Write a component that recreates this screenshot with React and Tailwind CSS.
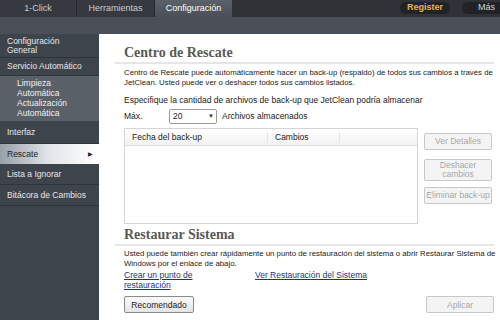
import React from "react";

const font = { fontFamily: '"Liberation Sans", Arial, sans-serif' };

function TopBar() {
  return (
    <div className="flex h-[17px] bg-[#2e3136] text-[9px] text-[#c9ccd0]">
      <div className="flex w-[77px] items-center justify-center border-r border-[#24272b] bg-[#363a40]">1-Click</div>
      <div className="flex w-[78px] items-center justify-center border-r border-[#24272b] bg-[#363a40]">Herramientas</div>
      <div className="flex w-[77px] items-center justify-center bg-gradient-to-b from-[#5c626a] to-[#4b5058] text-white">
        Configuración
      </div>
      <div className="flex-1" />
      <div className="mt-[2px] flex h-[12px] w-[50px] items-center justify-center rounded-full bg-[#202226] font-bold text-[#e8b34c]">
        Register
      </div>
      <div className="ml-[12px] mt-[2px] flex h-[12px] w-[38px] items-center rounded-l-full bg-[#202226] pl-[16px] text-[#d0d3d6]">
        Más
      </div>
    </div>
  );
}

function SideItem({ children, className = "" }) {
  return (
    <div className={"border-b border-[#30343a] px-[7px] text-[8.5px] text-[#e4e6e8] " + className}>{children}</div>
  );
}

function Sidebar() {
  return (
    <div className="w-[99px] shrink-0 bg-[#3e444c]">
      <SideItem className="flex h-[24px] flex-col justify-center leading-[9px]">
        <span>Configuración</span>
        <span>General</span>
      </SideItem>
      <SideItem className="flex h-[18px] items-center">Servicio Automático</SideItem>
      <div className="flex h-[45px] flex-col justify-center bg-[#5a6068] pl-[17px] text-[8.5px] leading-[9.5px] text-[#eef0f2]">
        <span>Limpieza</span>
        <span>Automática</span>
        <span className="mt-[1px]">Actualización</span>
        <span>Automática</span>
      </div>
      <SideItem className="flex h-[23px] items-center">Interfaz</SideItem>
      <div className="flex h-[20px] items-center justify-between bg-gradient-to-r from-[#98a0a8] via-[#e2e6ea] to-white pl-[7px] pr-[6px] text-[8.5px] text-[#222]">
        <span>Rescate</span>
        <span className="text-[6px]">▶</span>
      </div>
      <SideItem className="flex h-[21px] items-center">Lista a Ignorar</SideItem>
      <SideItem className="flex h-[21px] items-center">Bitácora de Cambios</SideItem>
    </div>
  );
}

function Heading({ children }) {
  return (
    <div className="ml-[-9px] border-b-2 border-[#e6e6e6] pb-[1px] pl-[9px]">
      <h2
        className="text-[14px] font-bold leading-[17px] text-[#595959]"
        style={{ fontFamily: '"Liberation Serif", serif' }}
      >
        {children}
      </h2>
    </div>
  );
}

function SideButton({ children, className = "" }) {
  return (
    <div
      className={
        "flex w-[68px] items-center justify-center rounded-[2px] border border-[#c8c8c8] bg-[#f4f4f4] text-center text-[8.5px] leading-[9px] text-[#a8a8a8] " +
        className
      }
    >
      {children}
    </div>
  );
}

function Main() {
  return (
    <div className="flex-1 bg-white pl-[25px] pr-[6px] pt-[10px] text-[8.5px] leading-[10px] text-[#222]">
      <Heading>Centro de Rescate</Heading>
      <p className="mt-[4px] mr-[-6px] text-[7.8px]">
        Centro de Rescate puede automáticamente hacer un back-up (respaldo) de todos sus cambios a través de JetClean.
        Usted puede ver o deshacer todos sus cambios listados.
      </p>
      <p className="mt-[7px]">Especifique la cantidad de archivos de back-up que JetClean podría almacenar</p>
      <div className="mt-[3px] flex h-[16px] items-center">
        <span className="w-[45px]">Máx.</span>
        <div className="flex h-[15px] w-[48px] items-center justify-between rounded-[2px] border border-[#9a9a9a] pl-[3px] pr-[2px]">
          <span>20</span>
          <span className="text-[6px] text-[#333]">▼</span>
        </div>
        <span className="ml-[5px]">Archivos almacenados</span>
      </div>
      <div className="mt-[4px] flex gap-[6px]">
        <div className="h-[96px] w-[294px] border border-[#d4d4d4]">
          <div className="flex h-[17px] items-center border-b border-[#e0e0e0] bg-gradient-to-b from-white to-[#f2f2f2]">
            <span className="w-[143px] border-r border-[#e4e4e4] pl-[7px]">Fecha del back-up</span>
            <span className="w-[72px] border-r border-[#e4e4e4] pl-[7px]">Cambios</span>
          </div>
        </div>
        <div className="flex flex-col pt-[5px]">
          <SideButton className="h-[17px]">Ver Detalles</SideButton>
          <SideButton className="mt-[9px] h-[22px] flex-col">
            <span>Deshacer</span>
            <span>cambios</span>
          </SideButton>
          <SideButton className="mt-[6px] h-[17px]">Eliminar back-up</SideButton>
        </div>
      </div>
      <div className="mt-[2px]">
        <Heading>Restaurar Sistema</Heading>
      </div>
      <p className="mt-[3px] mr-[-6px] text-[7.8px]">
        Usted puede también crear rápidamente un punto de restauración del sistema o abrir Restaurar Sistema de Windows
        por el enlace de abajo.
      </p>
      <div className="mt-[1px] flex">
        <a className="w-[131px] text-[#1a2f9e] underline">
          Crear un punto de
          <br />
          restauración
        </a>
        <a className="text-[#1a2f9e] underline">Ver Restauración del Sistema</a>
      </div>
      <div className="mt-[6px] flex justify-between">
        <div className="flex h-[17px] w-[70px] items-center justify-center rounded-[2px] border border-[#8a8a8a] bg-gradient-to-b from-[#fafafa] to-[#e4e4e4] text-[8.5px]">
          Recomendado
        </div>
        <div className="flex h-[17px] w-[68px] items-center justify-center rounded-[2px] border border-[#c8c8c8] bg-[#f4f4f4] text-[8.5px] text-[#a8a8a8]">
          Aplicar
        </div>
      </div>
    </div>
  );
}

export default function App() {
  return (
    <div className="flex h-[320px] w-[500px] flex-col overflow-hidden bg-white" style={font}>
      <TopBar />
      <div className="h-[17px] bg-[#4b5058]" />
      <div className="flex flex-1">
        <Sidebar />
        <Main />
      </div>
    </div>
  );
}
